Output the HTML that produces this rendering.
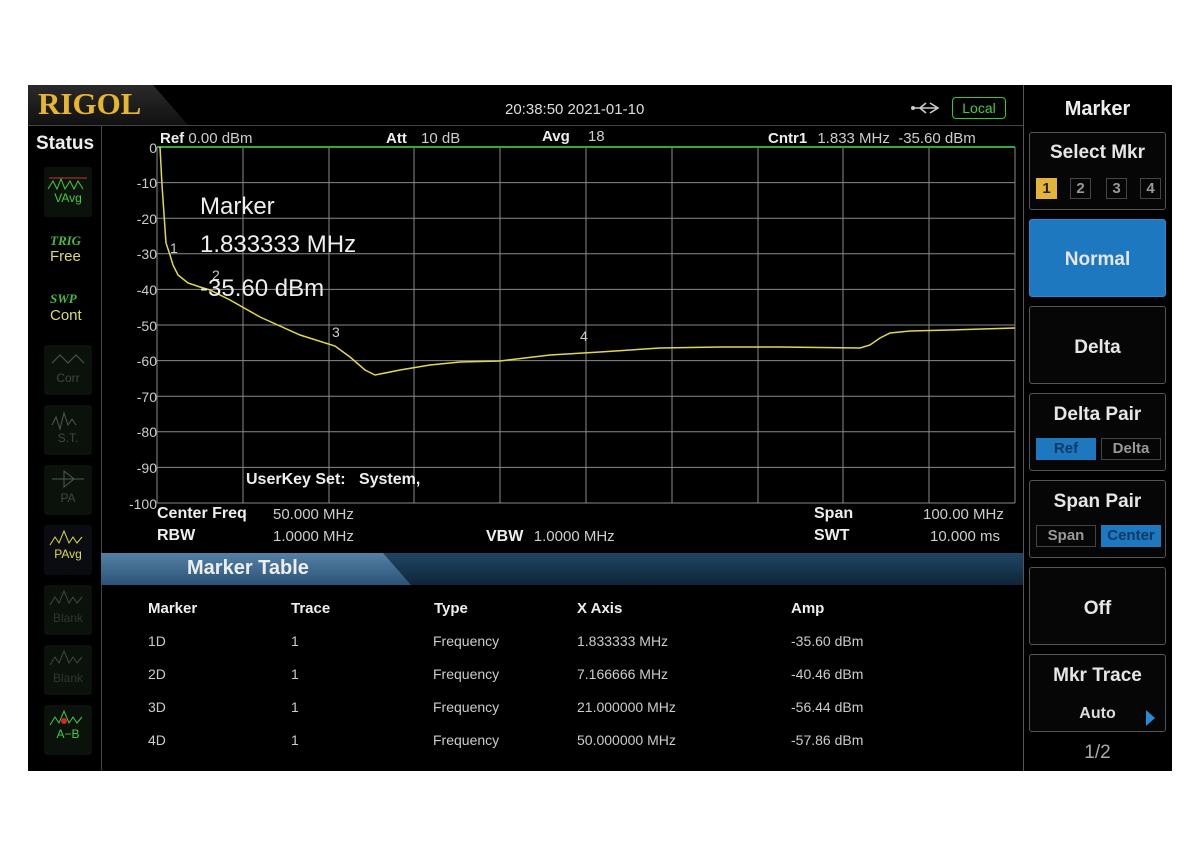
<!DOCTYPE html>
<html><head><meta charset="utf-8"><style>
*{margin:0;padding:0;box-sizing:border-box}
body{width:1200px;height:858px;background:#fff;position:relative;overflow:hidden;font-family:"Liberation Sans",sans-serif;color:#ddd}
.a{position:absolute;white-space:nowrap}
#scr{position:absolute;left:28px;top:85px;width:1144px;height:686px;background:#000}
.b{font-weight:bold}
.btn{position:absolute;left:1029px;width:137px;border:1px solid #555;border-radius:3px;background:#060606}
.btn .t{position:absolute;left:0;right:0;text-align:center;font-weight:bold;font-size:19px;color:#e6e6e6}
.sq{position:absolute;width:21px;height:21px;border:1px solid #444;font-size:15px;text-align:center;line-height:20px;color:#999;font-weight:bold}
.ic{position:absolute;left:44px;width:48px;height:50px;background:#0b120b;border-radius:3px}
.ic span{position:absolute;left:0;right:0;text-align:center;font-size:12px;top:26px}
</style></head><body>
<div id="scr"></div>
<div class="a" style="left:28px;top:85px;width:160px;height:40px;background:linear-gradient(#2a2a2a,#111);clip-path:polygon(0 0,125px 0,160px 40px,0 40px)"></div>
<div class="a" style="left:38px;top:86px;font-family:'Liberation Serif',serif;font-weight:bold;font-size:31px;color:#e8b52e">RIGOL</div>
<div class="a" style="left:28px;top:125px;width:995px;height:1px;background:#444"></div>
<div class="a" style="left:505px;top:101px;font-size:15px;color:#ddd">20:38:50 2021-01-10</div>
<svg class="a" style="left:910px;top:100px" width="32" height="16"><path d="M2 8H28M20 3L28 8 20 13M10 8L16 3M10 8L16 13" stroke="#ccc" stroke-width="1.6" fill="none"/><circle cx="3" cy="8" r="2" fill="#ccc"/></svg>
<div class="a" style="left:952px;top:97px;width:54px;height:22px;border:1px solid #3c3;border-radius:4px;color:#4c4;font-size:14px;text-align:center;line-height:20px">Local</div>
<div class="a" style="left:101px;top:125px;width:1px;height:646px;background:#444"></div>
<div class="a b" style="left:36px;top:133px;font-size:19px;color:#eee">Status</div>
<div class="ic" style="top:167px"><svg width="48" height="30"><path d="M5 11h38" stroke="#c33"/><path d="M4 22l5-8 4 8 4-10 4 10 5-8 4 8 4-8 5 8" stroke="#4c4" fill="none"/></svg><span style="color:#4c4;top:24px">VAvg</span></div>
<div class="a b" style="left:50px;top:233px;font-family:'Liberation Serif',serif;font-style:italic;font-size:13px;color:#4b4">TRIG</div>
<div class="a" style="left:50px;top:248px;font-size:15px;color:#dd6">Free</div>
<div class="a b" style="left:50px;top:291px;font-family:'Liberation Serif',serif;font-style:italic;font-size:13px;color:#4b4">SWP</div>
<div class="a" style="left:50px;top:307px;font-size:15px;color:#dd6">Cont</div>
<div class="ic" style="top:345px"><svg width="48" height="26"><path d="M8 18l8-8 8 8 8-8 8 8" stroke="#555" fill="none"/></svg><span style="color:#444">Corr</span></div>
<div class="ic" style="top:405px"><svg width="48" height="26"><path d="M8 20l4-8 4 12 4-16 4 12 4-6 4 6" stroke="#555" fill="none"/></svg><span style="color:#444">S.T.</span></div>
<div class="ic" style="top:465px"><svg width="48" height="26"><path d="M8 14h32M20 6v16l10-8z" stroke="#555" fill="none"/></svg><span style="color:#444">PA</span></div>
<div class="ic" style="top:525px;background:#0b0b12"><svg width="48" height="26"><path d="M6 20l5-8 4 6 5-12 5 12 4-6 4 6 5-6" stroke="#dd4" fill="none"/></svg><span style="color:#dd4;top:22px">PAvg</span></div>
<div class="ic" style="top:585px"><svg width="48" height="26"><path d="M6 20l5-8 4 6 5-12 5 12 4-6 4 6 5-6" stroke="#444" fill="none"/></svg><span style="color:#333">Blank</span></div>
<div class="ic" style="top:645px"><svg width="48" height="26"><path d="M6 20l5-8 4 6 5-12 5 12 4-6 4 6 5-6" stroke="#444" fill="none"/></svg><span style="color:#333">Blank</span></div>
<div class="ic" style="top:705px"><svg width="48" height="26"><path d="M6 20l5-8 4 6 5-12 5 12 4-6 4 6 5-6" stroke="#4c4" fill="none"/><circle cx="20" cy="16" r="3" fill="#d22"/></svg><span style="color:#4c4;top:22px">A−B</span></div>
<svg class="a" style="left:100px;top:125px" width="925" height="430">
<g stroke="#8a8a8a" stroke-width="1">
<path d="M57 22V378M143 22V378M229 22V378M314 22V378M400 22V378M486 22V378M572 22V378M658 22V378M743 22V378M829 22V378M915 22V378"/>
<path d="M57 57.6H915M57 93.2H915M57 128.8H915M57 164.4H915M57 200H915M57 235.6H915M57 271.2H915M57 306.8H915M57 342.4H915M57 378H915"/>
</g>
<path d="M57 22H915" stroke="#3a3" stroke-width="2"/>
<polyline fill="none" stroke="#e0d850" stroke-width="1.5" points="60,22 62,60 66,118 70,130 73,140 78,150 88,158 100,162 110,165 130,175 160,192 200,210 235,221 250,232 265,245 275,250 300,245 330,240 360,237 400,236 450,230 500,227 560,223 620,222 680,222 760,223 770,220 780,213 790,208 810,206 850,205 915,203"/>
<g font-family="Liberation Sans" font-size="14" fill="#ccc">
<text x="70" y="128">1</text><text x="112" y="155">2</text><text x="232" y="212">3</text><text x="480" y="216">4</text>
</g>
<g font-family="Liberation Sans" font-size="14" fill="#ccc" text-anchor="end">
<text x="57" y="28">0</text><text x="57" y="63">-10</text><text x="57" y="99">-20</text><text x="57" y="134">-30</text><text x="57" y="170">-40</text><text x="57" y="206">-50</text><text x="57" y="241">-60</text><text x="57" y="277">-70</text><text x="57" y="312">-80</text><text x="57" y="348">-90</text><text x="57" y="384">-100</text>
</g>
</svg>
<div class="a b" style="left:160px;top:130px;font-size:15px;color:#eee">Ref <span style="font-weight:normal;color:#ccc">0.00 dBm</span></div>
<div class="a b" style="left:386px;top:130px;font-size:15px;color:#eee">Att <span style="font-weight:normal;color:#ccc;margin-left:10px">10 dB</span></div>
<div class="a b" style="left:542px;top:128px;font-size:15px;color:#eee">Avg <span style="font-weight:normal;color:#ccc;margin-left:14px">18</span></div>
<div class="a b" style="left:768px;top:130px;font-size:15px;color:#eee">Cntr1 <span style="font-weight:normal;color:#ccc;margin-left:6px">1.833 MHz &nbsp;-35.60 dBm</span></div>
<div class="a" style="left:200px;top:193px;font-size:24px;color:#eee">Marker</div>
<div class="a" style="left:200px;top:231px;font-size:24px;color:#eee">1.833333 MHz</div>
<div class="a" style="left:200px;top:275px;font-size:24px;color:#eee">-35.60 dBm</div>
<div class="a b" style="left:246px;top:471px;font-size:16px;color:#eee">UserKey Set: &nbsp;&nbsp;System,</div>
<div class="a b" style="left:157px;top:505px;font-size:16px;color:#eee">Center Freq</div>
<div class="a" style="left:273px;top:506px;font-size:15px;color:#ccc">50.000 MHz</div>
<div class="a b" style="left:157px;top:527px;font-size:16px;color:#eee">RBW</div>
<div class="a" style="left:273px;top:528px;font-size:15px;color:#ccc">1.0000 MHz</div>
<div class="a b" style="left:486px;top:528px;font-size:16px;color:#eee">VBW <span style="font-weight:normal;color:#ccc;font-size:15px;margin-left:6px">1.0000 MHz</span></div>
<div class="a b" style="left:814px;top:505px;font-size:16px;color:#eee">Span</div>
<div class="a" style="left:923px;top:506px;font-size:15px;color:#ccc">100.00 MHz</div>
<div class="a b" style="left:814px;top:527px;font-size:16px;color:#eee">SWT</div>
<div class="a" style="left:930px;top:528px;font-size:15px;color:#ccc">10.000 ms</div>
<div class="a" style="left:101px;top:553px;width:922px;height:32px;background:linear-gradient(#1f4664,#0f2538)"></div>
<div class="a" style="left:101px;top:553px;width:310px;height:32px;background:linear-gradient(#5581a6,#2b5377);clip-path:polygon(0 0,282px 0,310px 32px,0 32px)"></div>
<div class="a b" style="left:187px;top:557px;font-size:20px;color:#eee">Marker Table</div>
<div class="a b" style="left:148px;top:600px;font-size:15px;color:#eee">Marker</div>
<div class="a b" style="left:291px;top:600px;font-size:15px;color:#eee">Trace</div>
<div class="a b" style="left:434px;top:600px;font-size:15px;color:#eee">Type</div>
<div class="a b" style="left:577px;top:600px;font-size:15px;color:#eee">X Axis</div>
<div class="a b" style="left:791px;top:600px;font-size:15px;color:#eee">Amp</div>
<div class="a" style="left:148px;top:625px;font-size:14px;color:#ccc;line-height:33px">1D<br>2D<br>3D<br>4D</div>
<div class="a" style="left:291px;top:625px;font-size:14px;color:#ccc;line-height:33px">1<br>1<br>1<br>1</div>
<div class="a" style="left:433px;top:625px;font-size:14px;color:#ccc;line-height:33px">Frequency<br>Frequency<br>Frequency<br>Frequency</div>
<div class="a" style="left:577px;top:625px;font-size:14px;color:#ccc;line-height:33px">1.833333 MHz<br>7.166666 MHz<br>21.000000 MHz<br>50.000000 MHz</div>
<div class="a" style="left:791px;top:625px;font-size:14px;color:#ccc;line-height:33px">-35.60 dBm<br>-40.46 dBm<br>-56.44 dBm<br>-57.86 dBm</div>
<div class="a" style="left:1023px;top:85px;width:1px;height:686px;background:#555"></div>
<div class="a b" style="left:1023px;top:98px;width:149px;text-align:center;font-size:20px;color:#eee">Marker</div>
<div class="btn" style="top:132px;height:78px"><div class="t" style="top:9px">Select Mkr</div>
<div class="sq" style="left:6px;top:45px;background:#e3b33c;color:#222;border-color:#e3b33c">1</div><div class="sq" style="left:40px;top:45px">2</div><div class="sq" style="left:76px;top:45px">3</div><div class="sq" style="left:110px;top:45px">4</div></div>
<div class="btn" style="top:219px;height:78px;background:#1d78c0;border-color:#2a8ad4"><div class="t" style="top:29px">Normal</div></div>
<div class="btn" style="top:306px;height:78px"><div class="t" style="top:30px">Delta</div></div>
<div class="btn" style="top:393px;height:78px"><div class="t" style="top:10px">Delta Pair</div>
<div class="a b" style="left:6px;top:44px;width:60px;height:22px;background:#1d78c0;color:#103a66;font-size:15px;text-align:center;line-height:22px">Ref</div>
<div class="a b" style="left:71px;top:44px;width:60px;height:22px;border:1px solid #444;color:#999;font-size:15px;text-align:center;line-height:20px">Delta</div></div>
<div class="btn" style="top:480px;height:78px"><div class="t" style="top:10px">Span Pair</div>
<div class="a b" style="left:6px;top:44px;width:60px;height:22px;border:1px solid #444;color:#999;font-size:15px;text-align:center;line-height:20px">Span</div>
<div class="a b" style="left:71px;top:44px;width:60px;height:22px;background:#1d78c0;color:#103a66;font-size:15px;text-align:center;line-height:22px">Center</div></div>
<div class="btn" style="top:567px;height:78px"><div class="t" style="top:30px">Off</div></div>
<div class="btn" style="top:654px;height:78px"><div class="t" style="top:10px">Mkr Trace</div>
<div class="a b" style="left:0;right:0;top:50px;text-align:center;font-size:16px;color:#ddd">Auto</div>
<div class="a" style="left:116px;top:55px;width:0;height:0;border-left:9px solid #2a8ad4;border-top:8px solid transparent;border-bottom:8px solid transparent"></div></div>
<div class="a" style="left:1023px;top:742px;width:149px;text-align:center;font-size:19px;color:#aaa">1/2</div>
</body></html>
